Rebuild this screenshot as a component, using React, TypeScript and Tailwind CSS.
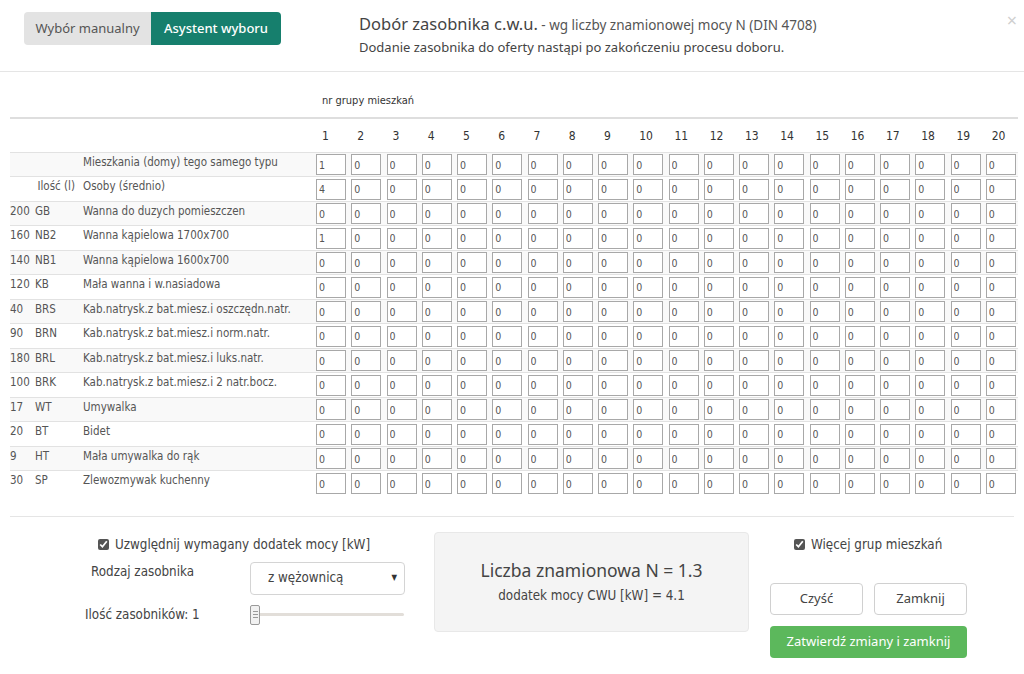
import React, { useState } from "react";

type Row = { a: string; b: string; label: string; first: number; spanAB?: boolean };

const rows: Row[] = [
  { a: "", b: "", label: "Mieszkania (domy) tego samego typu", first: 1 },
  { a: "", b: "Ilość (l)", label: "Osoby (średnio)", first: 4, spanAB: true },
  { a: "200", b: "GB", label: "Wanna do duzych pomieszczen", first: 0 },
  { a: "160", b: "NB2", label: "Wanna kąpielowa 1700x700", first: 1 },
  { a: "140", b: "NB1", label: "Wanna kąpielowa 1600x700", first: 0 },
  { a: "120", b: "KB", label: "Mała wanna i w.nasiadowa", first: 0 },
  { a: "40", b: "BRS", label: "Kab.natrysk.z bat.miesz.i oszczędn.natr.", first: 0 },
  { a: "90", b: "BRN", label: "Kab.natrysk.z bat.miesz.i norm.natr.", first: 0 },
  { a: "180", b: "BRL", label: "Kab.natrysk.z bat.miesz.i luks.natr.", first: 0 },
  { a: "100", b: "BRK", label: "Kab.natrysk.z bat.miesz.i 2 natr.bocz.", first: 0 },
  { a: "17", b: "WT", label: "Umywalka", first: 0 },
  { a: "20", b: "BT", label: "Bidet", first: 0 },
  { a: "9", b: "HT", label: "Mała umywalka do rąk", first: 0 },
  { a: "30", b: "SP", label: "Zlewozmywak kuchenny", first: 0 },
];

const groups = Array.from({ length: 20 }, (_, i) => i + 1);

const tableFont = { fontFamily: '"DejaVu Sans Condensed", "DejaVu Sans", sans-serif' };
const uiFont = { fontFamily: '"Noto Sans", "Open Sans", sans-serif' };

export default function App() {
  const [tab, setTab] = useState<"manual" | "assist">("assist");
  const [addPower, setAddPower] = useState(true);
  const [moreGroups, setMoreGroups] = useState(true);

  return (
    <div className="w-[1024px] h-[674px] bg-white text-[#333] overflow-hidden" style={uiFont}>
      {/* Header */}
      <div className="relative h-[72px] border-b border-[#e5e5e5] flex items-start">
        <div className="flex mt-[12px] ml-[24px] rounded-[4px] overflow-hidden h-[33px] text-[13px]">
          <button
            type="button"
            onClick={() => setTab("manual")}
            className={`w-[127px] flex items-center justify-center ${tab === "manual" ? "bg-[#167f6d] text-white font-medium" : "bg-[#e3e3e3] text-[#555]"}`}
          >
            Wybór manualny
          </button>
          <button
            type="button"
            onClick={() => setTab("assist")}
            className={`w-[130px] flex items-center justify-center ${tab === "assist" ? "bg-[#167f6d] text-white font-medium" : "bg-[#e3e3e3] text-[#555]"}`}
          >
            Asystent wyboru
          </button>
        </div>
        <div className="ml-[78px] mt-[12px]">
          <div className="leading-[24px] text-[#444]">
            <span className="text-[16.5px]">Dobór zasobnika c.w.u.</span>
            <span className="text-[13.5px] text-[#555]"> - wg liczby znamionowej mocy N (DIN 4708)</span>
          </div>
          <div className="text-[13px] text-[#444] leading-[18px] mt-[1px]">
            Dodanie zasobnika do oferty nastąpi po zakończeniu procesu doboru.
          </div>
        </div>
        <button type="button" className="absolute right-[7px] top-[11px] text-[#cfcfcf] text-[18px] leading-none">
          ×
        </button>
      </div>

      {/* Table */}
      <div className="px-[10px] text-[#555]" style={tableFont}>
        <table className="w-[1008px] border-collapse table-fixed text-[11.5px]">
          <colgroup>
            <col className="w-[25px]" />
            <col className="w-[48px]" />
            <col className="w-[230px]" />
            {groups.map((g) => (
              <col key={g} className="w-[35.25px]" />
            ))}
          </colgroup>
          <thead>
            <tr className="h-[46px]">
              <th colSpan={3} />
              <th colSpan={20} className="text-left font-normal align-bottom pb-[8px] pl-[9px] text-[#333] text-[11px]">
                nr grupy mieszkań
              </th>
            </tr>
            <tr className="h-[34px] border-t-2 border-[#dedede]">
              <th colSpan={3} />
              {groups.map((g) => (
                <th key={g} className="text-left font-normal pl-[9px] text-[#333] text-[12px] pt-[1px]">
                  {g}
                </th>
              ))}
            </tr>
          </thead>
          <tbody>
            {rows.map((r, ri) => (
              <tr key={ri} className={`h-[24.5px] border-t border-[#e2e2e2] ${ri % 2 === 0 ? "bg-[#f9f9f9]" : "bg-white"}`}>
                {r.spanAB ? (
                  <td colSpan={2} className="align-top pt-[1px] text-right pr-[8px] whitespace-nowrap">
                    {r.b}
                  </td>
                ) : (
                  <>
                    <td className="align-top pt-[1px] whitespace-nowrap">{r.a}</td>
                    <td className="align-top pt-[1px]">{r.b}</td>
                  </>
                )}
                <td className="align-top pt-[1px] whitespace-nowrap">{r.label}</td>
                {groups.map((g) => (
                  <td key={g} className="pl-[3px] align-middle">
                    <input
                      defaultValue={g === 1 ? String(r.first) : "0"}
                      className="block w-[30px] h-[21px] mt-[1px] border border-[#a8a8a8] bg-white text-[10.5px] text-[#555] pl-[2px] outline-none"
                      style={tableFont}
                    />
                  </td>
                ))}
              </tr>
            ))}
          </tbody>
        </table>
        <div className="mt-[21px] border-t border-[#e5e5e5]" />
      </div>

      {/* Bottom section */}
      <div className="flex text-[13.3px] text-[#444]" style={tableFont}>
        <div className="w-[434px] pl-[85px] pt-[18px]">
          <label className="flex items-center ml-[13px] gap-[6px]">
            <input type="checkbox" checked={addPower} onChange={() => setAddPower(!addPower)} className="w-[11px] h-[11px] accent-[#555]" />
            <span>Uzwględnij wymagany dodatek mocy [kW]</span>
          </label>
          <div className="flex items-start mt-[16px]">
            <span className="w-[165px] pl-[6px] mt-[-9px]">Rodzaj zasobnika</span>
            <div className="w-[155px] h-[33px] border border-[#d4d4d4] rounded-[4px] flex items-center justify-between pl-[17px] pr-[7px] mt-[-9px]">
              <span>z wężownicą</span>
              <span className="text-[8px] text-[#333]">▼</span>
            </div>
          </div>
          <div className="flex items-center mt-[10px]">
            <span className="w-[165px]">Ilość zasobników: 1</span>
            <div className="relative w-[154px] h-[20px] flex items-center">
              <div className="w-full h-[3px] bg-[#e2ded9] rounded" />
              <div className="absolute left-0 top-0 w-[10px] h-[20px] border border-[#9a9a9a] bg-[#f1f1f1] rounded-[2px] flex flex-col items-center justify-center gap-[2px]">
                <span className="block w-[5px] h-px bg-[#999]" />
                <span className="block w-[5px] h-px bg-[#999]" />
                <span className="block w-[5px] h-px bg-[#999]" />
              </div>
            </div>
          </div>
        </div>

        <div className="mt-[15px] w-[315px] h-[100px] bg-[#f4f4f4] border border-[#e8e8e8] rounded-[4px] flex flex-col items-center justify-center">
          <div className="text-[17.5px] text-[#444] leading-[26px] mt-[-2px]" style={uiFont}>
            Liczba znamionowa N = 1.3
          </div>
          <div className="text-[13.3px] text-[#444] mt-[3px]">dodatek mocy CWU [kW] = 4.1</div>
        </div>

        <div className="pl-[21px] pt-[18px]">
          <label className="flex items-center ml-[24px] gap-[6px]">
            <input type="checkbox" checked={moreGroups} onChange={() => setMoreGroups(!moreGroups)} className="w-[11px] h-[11px] accent-[#555]" />
            <span>Więcej grup mieszkań</span>
          </label>
          <div className="flex gap-[11px] mt-[28px]" style={uiFont}>
            <button type="button" className="w-[93px] h-[32px] border border-[#d0d0d0] rounded-[4px] bg-white text-[13px] text-[#444]">
              Czyść
            </button>
            <button type="button" className="w-[93px] h-[32px] border border-[#d0d0d0] rounded-[4px] bg-white text-[13px] text-[#444]">
              Zamknij
            </button>
          </div>
          <button
            type="button"
            className="mt-[11px] w-[197px] h-[32px] rounded-[4px] bg-[#5cb85c] text-white text-[13px]"
            style={uiFont}
          >
            Zatwierdź zmiany i zamknij
          </button>
        </div>
      </div>
    </div>
  );
}
